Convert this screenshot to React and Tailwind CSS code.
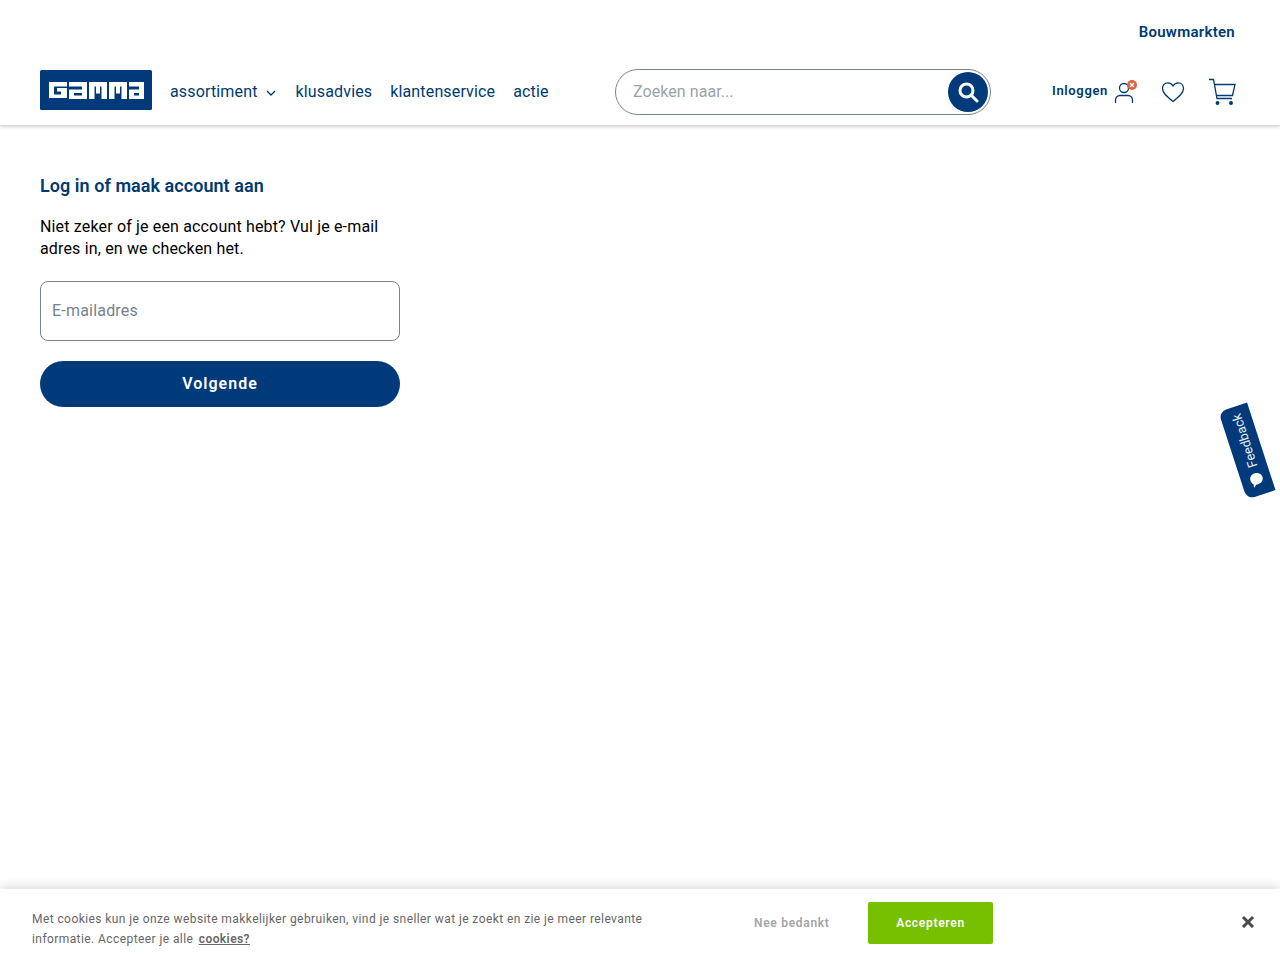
import React from "react";

const font = { fontFamily: '"Roboto", "Liberation Sans", sans-serif' };

function Logo() {
  return (
    <svg width="112" height="40" viewBox="0 0 112 40" className="block">
      <rect width="112" height="40" rx="1.500" fill="#003a7a" />
      <g fill="#fff" fillRule="evenodd">
        <path d="M9 12h18v4.500h-13v8h7v-3h-4v-3.500h10v10h-18z" />
        <path d="M29 12h18v17h-18v-9.500h13v-3h-13zM34 23v2.500h8v-2.500z" />
        <path d="M49 12h18v17h-5.500v-12.500h-1.500v7h-4v-7h-1.500v12.500h-5.500z" />
        <path d="M69 12h18v17h-5.500v-12.500h-1.500v7h-4v-7h-1.500v12.500h-5.500z" />
        <path d="M89 12h15v17h-15v-9.500h10v-3h-10zM94 23v2.500h5v-2.500z" />
      </g>
    </svg>
  );
}

function NavLink({ children }) {
  return <a className="text-[16px] leading-6 tracking-[0.15px] text-[#003a70] whitespace-nowrap">{children}</a>;
}

export default function App() {
  return (
    <div style={font} className="relative h-[960px] w-[1280px] overflow-hidden bg-white">
      <header className="h-[126px] border-b border-[#d9d9d9] shadow-[0_1px_3px_rgba(0,0,0,0.18)] px-10 flex flex-col">
        <div className="h-[64px] flex items-start justify-end pt-[22px] pr-[5px]">
          <a className="text-[15px] leading-[20px] font-semibold tracking-[0.27px] text-[#003a70]">Bouwmarkten</a>
        </div>
        <div className="flex items-center h-[56px] pb-[1px]">
          <div className="-mt-[3px]"><Logo /></div>
          <nav className="ml-[18px] flex w-[379px] items-center">
            <NavLink>assortiment</NavLink>
            <svg width="12" height="12" viewBox="0 0 12 12" className="ml-[7px] mt-[2px]" fill="none" stroke="#003a70" strokeWidth="1.300">
              <path d="M2 4l4 4 4-4" />
            </svg>
            <div className="ml-[19px]"><NavLink>klusadvies</NavLink></div>
            <div className="ml-[18px]"><NavLink>klantenservice</NavLink></div>
            <div className="ml-[18px]"><NavLink>actie</NavLink></div>
          </nav>
          <div className="ml-[66px] h-[46px] w-[376px] rounded-full border border-[#758592] flex items-center justify-between pl-[17px] pr-[2px]">
            <span className="text-[16px] text-[#9aa3aa] tracking-[0.07px]">Zoeken naar...</span>
            <span className="h-10 w-10 rounded-full bg-[#003a7a] flex items-center justify-center">
              <svg width="22" height="22" viewBox="0 0 22 22" fill="none" stroke="#fff" strokeWidth="3">
                <circle cx="9.500" cy="9.500" r="6.500" />
                <path d="M14.500 14.500l5.500 5.500" strokeLinecap="round" />
              </svg>
            </span>
          </div>
          <a className="ml-[61px] -mt-[1px] text-[13px] font-semibold tracking-[0.65px] text-[#003a70]">Inloggen</a>
          <span className="relative ml-[6px] block h-[26px] w-[24px]">
            <svg width="24" height="26" viewBox="0 0 24 26" fill="none" stroke="#003a70" strokeWidth="1.300">
              <circle cx="10" cy="9" r="4.500" />
              <path d="M1.500 24v-3c0-2.500 2-4.500 4.500-4.500h8c2.500 0 4.500 2 4.500 4.500v3" />
            </svg>
            <svg width="10" height="10" viewBox="0 0 10 10" className="absolute right-[1px] top-[1px]">
              <circle cx="5" cy="5" r="5" fill="#e0603c" />
              <path d="M3 3l4 4M7 3l-4 4" stroke="#fff" strokeWidth="1.300" />
            </svg>
          </span>
          <svg width="24" height="22" viewBox="0 0 24 22" className="ml-[23px]" fill="none" stroke="#003a70" strokeWidth="1.300">
            <path d="M12 20.500C6 15.500 1.500 12 1.500 7.500 1.500 4 4 1.800 6.800 1.800c2.200 0 4 1 5.200 3.200 1.200-2.200 3-3.200 5.200-3.200 2.800 0 5.300 2.200 5.300 5.700 0 4.500-4.500 8-10.500 13z" />
          </svg>
          <svg width="28" height="28" viewBox="0 0 28 28" className="ml-[23px]" fill="none" stroke="#003a70" strokeWidth="1.300">
            <path d="M1 1.500h4.500L9 20.500h15" />
            <path d="M6.500 6.500h20.500l-2.500 11H8.500" />
            <circle cx="9.500" cy="25" r="1.300" fill="#003a70" />
            <circle cx="23" cy="25" r="1.300" fill="#003a70" />
          </svg>
        </div>
      </header>

      <main className="ml-10 w-[360px]">
        <h1 className="mt-[48px] text-[18px] leading-[24px] font-semibold tracking-[0.05px] text-[#003a70]">Log in of maak account aan</h1>
        <p className="mt-[18px] text-[16px] leading-[22px] tracking-[0.16px] text-black">Niet zeker of je een account hebt? Vul je e-mail adres in, en we checken het.</p>
        <div className="mt-[21px] h-[60px] rounded-lg border border-[#7a858e] flex items-center px-[11px] text-[16px] tracking-[0.2px] text-[#75828c]">E-mailadres</div>
        <button className="mt-5 h-[46px] w-full rounded-full bg-[#003a7a] text-white text-[16px] font-semibold tracking-[1px]">Volgende</button>
      </main>

      <div className="absolute left-[1232px] top-[405px] flex h-[92px] w-[30px] rotate-[-18deg] items-center justify-center rounded-l-lg bg-[#003a7a]">
        <div className="flex -rotate-90 items-center gap-[5px] whitespace-nowrap">
          <svg width="16" height="16" viewBox="0 0 14 14" className="rotate-90">
            <path d="M7 1c3.300 0 5.500 2.200 5.500 5s-2.200 5-5.500 5c-.6 0-1.200-.1-1.700-.2L2.500 13l.6-3.300C2 8.800 1.500 7.500 1.500 6 1.500 3.200 3.700 1 7 1z" fill="#fff" />
          </svg>
          <span className="text-[13px] leading-none text-[#e6edf5]">Feedback</span>
        </div>
      </div>

      <div className="absolute left-0 top-[889px] flex h-[71px] w-[1280px] items-start bg-white pl-8 shadow-[0_-2px_10px_rgba(0,0,0,0.16)]">
        <p className="mt-[20px] w-[640px] text-[12px] leading-[20px] tracking-[0.42px] text-[#666]">
          Met cookies kun je onze website makkelijker gebruiken, vind je sneller wat je zoekt en zie je meer relevante informatie. Accepteer je alle{" "}
          <a className="ml-[2px] font-semibold underline">cookies?</a>
        </p>
        <span className="ml-[82px] mt-[25px] w-[76px] whitespace-nowrap text-[12px] font-semibold tracking-[0.7px] text-[#a5a5a5]">Nee bedankt</span>
        <button className="ml-[38px] mt-[13px] h-[42px] w-[125px] rounded-[2px] bg-[#76c000] text-[12px] font-semibold tracking-[0.7px] text-white">Accepteren</button>
        <svg width="14" height="14" viewBox="0 0 14 14" className="ml-[248px] mt-[26px]" fill="none" stroke="#4a4a4a" strokeWidth="3">
          <path d="M2 2l10 10M12 2L2 12" />
        </svg>
      </div>
    </div>
  );
}
